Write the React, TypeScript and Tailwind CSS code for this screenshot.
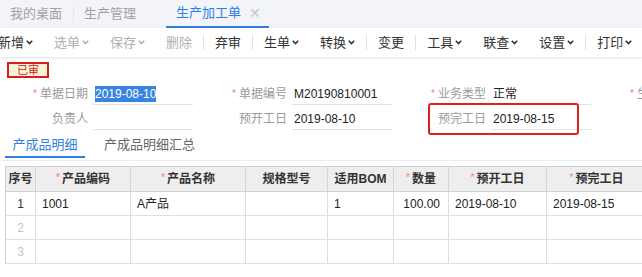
import React from 'react';

const font = "font-['Liberation_Sans','Noto_Sans_CJK_SC',sans-serif]";

function Chevron() {
  return (
    <svg width="7" height="5" viewBox="0 0 7 5" className="ml-[2px]">
      <polyline points="0.8,0.8 3.5,3.6 6.2,0.8" fill="none" stroke="currentColor" strokeWidth="1.6" />
    </svg>
  );
}

const tools = [
  { t: '新增', dd: true, on: true },
  { t: '选单', dd: true, on: false },
  { t: '保存', dd: true, on: false },
  { t: '删除', dd: false, on: false, sep: true },
  { t: '弃审', dd: false, on: true, sep: true },
  { t: '生单', dd: true, on: true },
  { t: '转换', dd: true, on: true, sep: true },
  { t: '变更', dd: false, on: true, sep: true },
  { t: '工具', dd: true, on: true },
  { t: '联查', dd: true, on: true },
  { t: '设置', dd: true, on: true, sep: true },
  { t: '打印', dd: true, on: true },
];

function Field({ label, star, value, selected }: { label: string; star?: boolean; value?: string; selected?: boolean }) {
  return (
    <div className="flex w-[199px] h-[22px] shrink-0">
      <div className="w-[88px] text-right text-[12px] leading-[22px] text-[#9a9a9a] whitespace-nowrap">
        {star && <span className="text-[#ee8080] text-[10px] mr-[3px] relative top-[-1px]">*</span>}
        {label}
      </div>
      <div className="ml-[5px] w-[100px] h-[22px] border-b border-[#e2e2e2] pl-[2px] text-[12px] leading-[22px] text-[#222] whitespace-nowrap">
        {selected ? <span className="bg-[#3a84e0] text-white py-[1px]">{value}</span> : value}
      </div>
    </div>
  );
}

const cols = [
  { h: '序号', w: 'w-[30px]' },
  { h: '产品编码', w: 'w-[95px]', s: true },
  { h: '产品名称', w: 'w-[115px]', s: true },
  { h: '规格型号', w: 'w-[82px]' },
  { h: '适用BOM', w: 'w-[66px]' },
  { h: '数量', w: 'w-[55px]', s: true },
  { h: '预开工日', w: 'w-[98px]', s: true },
  { h: '预完工日', w: 'w-[100px]', s: true },
];

const rows = [
  ['1', '1001', 'A产品', '', '1', '100.00', '2019-08-10', '2019-08-15'],
  ['2', '', '', '', '', '', '', ''],
  ['3', '', '', '', '', '', '', ''],
];

export default function App() {
  return (
    <div className={`w-[642px] h-[277px] overflow-hidden bg-white relative ${font}`}>
      {/* page tabs */}
      <div className="h-[28px] bg-[#f2f4f9] flex items-center text-[13px] text-[#a3a3a3]">
        <span className="ml-[10px]">我的桌面</span>
        <span className="ml-[11px] w-px h-[16px] bg-[#e3e6ee]" />
        <span className="ml-[10px]">生产管理</span>
        <div className="ml-[30px] w-[103px] h-[28px] flex items-center border-b-2 border-[#2f7fe0] pl-[10px]">
          <span className="text-[#2f7fe0]">生产加工单</span>
          <span className="ml-[8px] text-[#c8c8c8] text-[14px] leading-none">✕</span>
        </div>
      </div>

      {/* toolbar */}
      <div className="h-[29px] bg-white flex items-center text-[13px] shadow-[0_1px_3px_rgba(0,0,0,0.12)] relative z-10">
        <div className="flex items-center ml-[-2px]">
          {tools.map((it, i) => (
            <React.Fragment key={i}>
              <span className={`flex items-center whitespace-nowrap ${it.on ? 'text-[#333]' : 'text-[#b0b0b0]'}`}>
                {it.t}
                {it.dd && <Chevron />}
              </span>
              {it.sep ? (
                <span className="mx-[11px] w-px h-[15px] bg-[#e0e0e0]" />
              ) : (
                i < tools.length - 1 && <span className="w-[21px]" />
              )}
            </React.Fragment>
          ))}
        </div>
      </div>

      {/* status badge */}
      <div className="pl-[7px] pt-[5px]">
        <div className="w-[42px] h-[16px] border-2 border-[#d42020] bg-[#fdf3d6] text-[#d42020] text-[11px] leading-[12px] text-center">
          已审
        </div>
      </div>

      {/* header form */}
      <div className="mt-[5px] flex flex-col gap-[3px] w-max">
        <div className="flex">
          <Field label="单据日期" star value="2019-08-10" selected />
          <Field label="单据编号" star value="M20190810001" />
          <Field label="业务类型" star value="正常" />
          <Field label="生产部门" star />
        </div>
        <div className="flex">
          <Field label="负责人" />
          <Field label="预开工日" value="2019-08-10" />
          <Field label="预完工日" value="2019-08-15" />
        </div>
      </div>

      <div className="absolute left-[428px] top-[103px] w-[151px] h-[32px] border-2 border-[#e0201c] rounded-[3px]" />

      {/* detail tabs */}
      <div className="mt-[1px] h-[30px] border-b border-[#ececec] flex text-[13px]">
        <div className="ml-[5px] w-[80px] h-[27px] pt-[5px] leading-[18px] text-center border-b-2 border-[#2f7fe0] text-[#2f7fe0]">
          产成品明细
        </div>
        <div className="ml-[19px] h-[27px] pt-[5px] leading-[18px] text-[#666]">产成品明细汇总</div>
      </div>

      {/* detail table */}
      <div className="mt-[5px] ml-[5px] w-max border-l border-t border-[#d0d0d0] text-[12px]">
        <div className="flex h-[25px] bg-[#eeeeee] border-b border-[#d0d0d0] font-bold text-[#333]">
          {cols.map((c, i) => (
            <div key={i} className={`${c.w} shrink-0 border-r border-[#d4d4d4] flex items-center justify-center whitespace-nowrap`}>
              {c.s && <span className="text-[#ee8080] font-normal text-[10px] mr-[2px] relative top-[-2px]">*</span>}
              {c.h}
            </div>
          ))}
        </div>
        {rows.map((r, ri) => (
          <div key={ri} className="flex h-[24px] border-b border-[#e0e0e0] text-[#222]">
            {r.map((v, ci) => (
              <div
                key={ci}
                className={`${cols[ci].w} shrink-0 border-r border-[#dedede] flex items-center whitespace-nowrap ${
                  ci === 0
                    ? `justify-center ${ri === 0 ? 'text-[#333]' : 'text-[#c4c4c4]'}`
                    : ci === 5
                    ? 'justify-end pr-[8px]'
                    : 'pl-[6px]'
                }`}
              >
                {v}
              </div>
            ))}
          </div>
        ))}
      </div>
    </div>
  );
}
